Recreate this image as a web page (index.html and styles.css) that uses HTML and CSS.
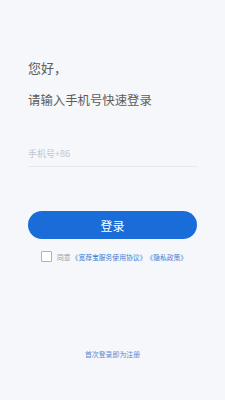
FILE: index.html
```html
<!DOCTYPE html>
<html lang="zh-CN">
<head>
    <meta charset="UTF-8">
    <meta name="viewport" content="width=device-width, initial-scale=1.0">
    <title>登录</title>
    <link rel="stylesheet" href="styles.css">
</head>
<body>
    <div class="login-page">
        <div class="greeting">您好，</div>
        <div class="subtitle">请输入手机号快速登录</div>

        <div class="phone-field">
            <input type="tel" placeholder="手机号+86">
        </div>

        <button class="login-btn">登录</button>

        <label class="agreement">
            <span class="checkbox"></span>
            <span class="agree-text">同意</span>
            <a class="link">《宽荐宝服务使用协议》</a>
            <a class="link">《隐私政策》</a>
        </label>

        <div class="register-tip">首次登录即为注册</div>
    </div>
</body>
</html>
```

FILE: styles.css
```css
:root {
    --primary-color: #1a6dd9;
    --link-color: #3b7dd6;
    --text-color: #5c5c5c;
    --background-color: #f5f7fb;
}

* {
    margin: 0;
    padding: 0;
    box-sizing: border-box;
    font-family: "Noto Sans CJK SC", "Noto Sans", sans-serif;
}

body {
    background: var(--background-color);
    min-height: 100vh;
}

.login-page {
    display: flex;
    flex-direction: column;
    padding: 59px 28px 0;
}

.greeting {
    font-size: 13px;
    line-height: 18px;
    color: var(--text-color);
}

.subtitle {
    margin-top: 14px;
    font-size: 12.4px;
    line-height: 18px;
    color: var(--text-color);
}

.phone-field {
    margin-top: 31px;
    border-bottom: 1px solid #e6e8ec;
}

.phone-field input {
    display: block;
    width: 100%;
    height: 26px;
    border: none;
    outline: none;
    background: transparent;
    font-size: 9px;
    color: var(--text-color);
}

.phone-field input::placeholder {
    color: #c2c5cc;
}

.login-btn {
    margin-top: 44px;
    height: 28px;
    border: none;
    border-radius: 14px;
    background: var(--primary-color);
    color: white;
    font-size: 12px;
    cursor: pointer;
}

.agreement {
    margin-top: 11px;
    height: 13px;
    display: flex;
    align-items: center;
    padding-left: 13px;
    font-size: 6.8px;
}

.checkbox {
    width: 11px;
    height: 11px;
    border: 1px solid #a3b4cf;
    border-radius: 1px;
    background: white;
    margin-right: 5px;
    flex-shrink: 0;
}

.agree-text {
    color: #999;
    margin-right: 1px;
}

.link {
    color: var(--link-color);
}

.register-tip {
    margin-top: 86px;
    text-align: center;
    font-size: 6.9px;
    line-height: 10px;
    color: #5a8ad0;
}
```
